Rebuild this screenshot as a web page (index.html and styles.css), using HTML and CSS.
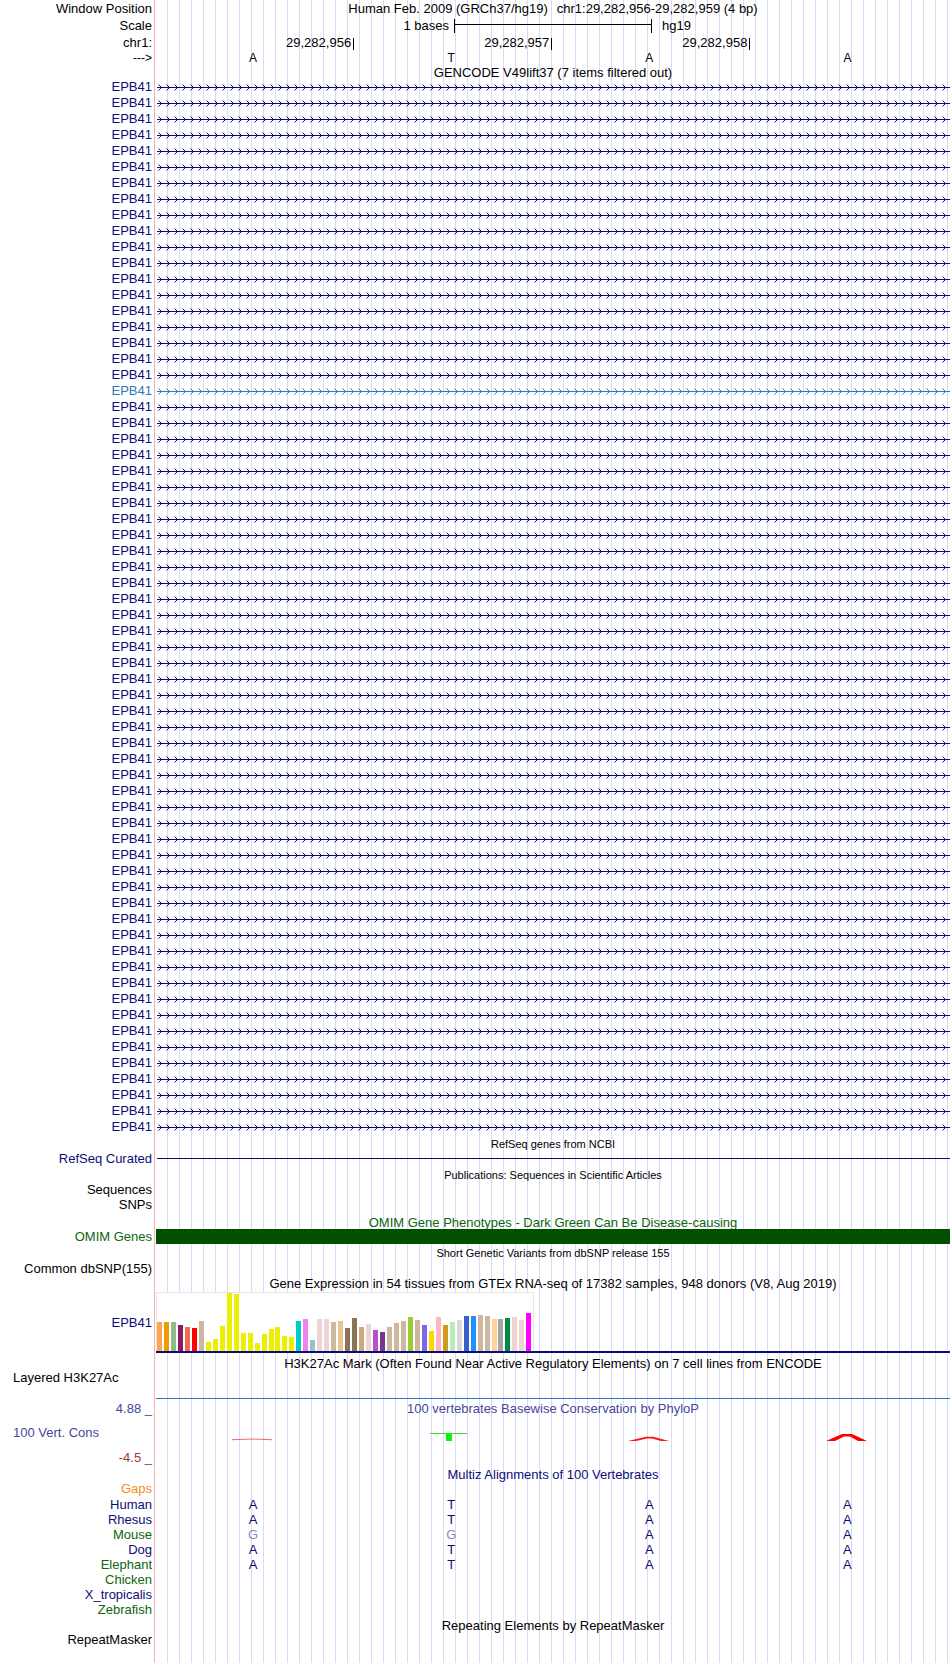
FILE: index.html
```html
<!DOCTYPE html>
<html>
<head>
  <title>UCSC Genome Browser - EPB41 (hg19)</title>
  <link rel="stylesheet" href="styles.css">
</head>
<body>
<div class="browser">

  <!-- ruler -->
  <div class="row hd">
    <div class="lbl">Window Position</div>
    <div class="dat ttl">Human Feb. 2009 (GRCh37/hg19)<span class="pos">chr1:29,282,956-29,282,959 (4 bp)</span></div>
  </div>
  <div class="row hd">
    <div class="lbl">Scale</div>
    <div class="dat scale">
      <span class="scale-txt">1 bases</span>
      <svg width="198" height="17"><path d="M0.5 2V16M197.5 2V16M0 7.5H198" stroke="#000" fill="none"/></svg>
      <span class="scale-db">hg19</span>
    </div>
  </div>
  <div class="row hd">
    <div class="lbl">chr1:</div>
    <div class="dat bases">
      <span class="coord">29,282,956<i class="tick"></i></span>
      <span class="coord">29,282,957<i class="tick"></i></span>
      <span class="coord">29,282,958<i class="tick"></i></span>
    </div>
  </div>
  <div class="row strand">
    <div class="lbl">---&gt;</div>
    <div class="dat bases"><span>A</span><span>T</span><span>A</span><span>A</span></div>
  </div>

  <!-- GENCODE -->
  <div class="row gencode-title">
    <div class="lbl"></div>
    <div class="dat ttl">GENCODE V49lift37 (7 items filtered out)</div>
  </div>
  <div class="genes">
    <div class="lbl gene-names">
      <div>EPB41</div><div>EPB41</div><div>EPB41</div><div>EPB41</div><div>EPB41</div>
      <div>EPB41</div><div>EPB41</div><div>EPB41</div><div>EPB41</div><div>EPB41</div>
      <div>EPB41</div><div>EPB41</div><div>EPB41</div><div>EPB41</div><div>EPB41</div>
      <div>EPB41</div><div>EPB41</div><div>EPB41</div><div>EPB41</div><div class="hl">EPB41</div>
      <div>EPB41</div><div>EPB41</div><div>EPB41</div><div>EPB41</div><div>EPB41</div>
      <div>EPB41</div><div>EPB41</div><div>EPB41</div><div>EPB41</div><div>EPB41</div>
      <div>EPB41</div><div>EPB41</div><div>EPB41</div><div>EPB41</div><div>EPB41</div>
      <div>EPB41</div><div>EPB41</div><div>EPB41</div><div>EPB41</div><div>EPB41</div>
      <div>EPB41</div><div>EPB41</div><div>EPB41</div><div>EPB41</div><div>EPB41</div>
      <div>EPB41</div><div>EPB41</div><div>EPB41</div><div>EPB41</div><div>EPB41</div>
      <div>EPB41</div><div>EPB41</div><div>EPB41</div><div>EPB41</div><div>EPB41</div>
      <div>EPB41</div><div>EPB41</div><div>EPB41</div><div>EPB41</div><div>EPB41</div>
      <div>EPB41</div><div>EPB41</div><div>EPB41</div><div>EPB41</div><div>EPB41</div>
      <div>EPB41</div>
    </div>
    <div class="dat">
      <svg width="794" height="1056">
        <defs>
          <pattern id="tx" width="8" height="16" patternUnits="userSpaceOnUse">
            <path d="M0 8.5H8M2.5 5.5L5.5 8.5L2.5 11.5" fill="none" stroke="#0c0c78"/>
          </pattern>
          <pattern id="tx-hl" width="8" height="16" patternUnits="userSpaceOnUse">
            <path d="M0 8.5H8M2.5 5.5L5.5 8.5L2.5 11.5" fill="none" stroke="#2a7ab8"/>
          </pattern>
        </defs>
        <rect x="1" y="0" width="793" height="304" fill="url(#tx)"/>
        <rect x="1" y="304" width="793" height="16" fill="url(#tx-hl)"/>
        <rect x="1" y="320" width="793" height="736" fill="url(#tx)"/>
      </svg>
    </div>
  </div>

  <!-- RefSeq -->
  <div class="row refseq-title">
    <div class="lbl"></div>
    <div class="dat ttl small">RefSeq genes from NCBI</div>
  </div>
  <div class="row refseq">
    <div class="lbl navy">RefSeq Curated</div>
    <div class="dat"><div class="gene-line"></div></div>
  </div>

  <!-- Publications -->
  <div class="row pubs-title">
    <div class="lbl"></div>
    <div class="dat ttl small">Publications: Sequences in Scientific Articles</div>
  </div>
  <div class="row pubs-seq">
    <div class="lbl">Sequences</div>
    <div class="dat"></div>
  </div>
  <div class="row pubs-snp">
    <div class="lbl">SNPs</div>
    <div class="dat"></div>
  </div>

  <!-- OMIM -->
  <div class="row omim-title">
    <div class="lbl"></div>
    <div class="dat ttl green">OMIM Gene Phenotypes - Dark Green Can Be Disease-causing</div>
  </div>
  <div class="row omim">
    <div class="lbl green">OMIM Genes</div>
    <div class="dat"><div class="omim-bar"></div></div>
  </div>

  <!-- dbSNP -->
  <div class="row snp-title">
    <div class="lbl"></div>
    <div class="dat ttl small">Short Genetic Variants from dbSNP release 155</div>
  </div>
  <div class="row snp">
    <div class="lbl">Common dbSNP(155)</div>
    <div class="dat"></div>
  </div>

  <!-- GTEx -->
  <div class="row gtex-title">
    <div class="lbl"></div>
    <div class="dat ttl">Gene Expression in 54 tissues from GTEx RNA-seq of 17382 samples, 948 donors (V8, Aug 2019)</div>
  </div>
  <div class="row gtex">
    <div class="lbl navy">EPB41</div>
    <div class="dat">
      <div class="gtex-box">
        <i class="bar" style="height:29px;background:#ffa54f"></i>
        <i class="bar" style="height:29px;background:#ee9a00"></i>
        <i class="bar" style="height:29px;background:#8fbc8f"></i>
        <i class="bar" style="height:26px;background:#8b1c62"></i>
        <i class="bar" style="height:24px;background:#ee6a50"></i>
        <i class="bar" style="height:23px;background:#ff0000"></i>
        <i class="bar" style="height:30px;background:#cdb79e"></i>
        <i class="bar" style="height:9px;background:#eeee00"></i>
        <i class="bar" style="height:12px;background:#eeee00"></i>
        <i class="bar" style="height:25px;background:#eeee00"></i>
        <i class="bar" style="height:58px;background:#eeee00"></i>
        <i class="bar" style="height:57px;background:#eeee00"></i>
        <i class="bar" style="height:18px;background:#eeee00"></i>
        <i class="bar" style="height:18px;background:#eeee00"></i>
        <i class="bar" style="height:8px;background:#eeee00"></i>
        <i class="bar" style="height:17px;background:#eeee00"></i>
        <i class="bar" style="height:22px;background:#eeee00"></i>
        <i class="bar" style="height:24px;background:#eeee00"></i>
        <i class="bar" style="height:15px;background:#eeee00"></i>
        <i class="bar" style="height:14px;background:#eeee00"></i>
        <i class="bar" style="height:30px;background:#00cdcd"></i>
        <i class="bar" style="height:32px;background:#ee82ee"></i>
        <i class="bar" style="height:11px;background:#9ac0cd"></i>
        <i class="bar" style="height:32px;background:#eed5d2"></i>
        <i class="bar" style="height:32px;background:#eed5d2"></i>
        <i class="bar" style="height:29px;background:#cdb79e"></i>
        <i class="bar" style="height:30px;background:#eec591"></i>
        <i class="bar" style="height:23px;background:#8b7355"></i>
        <i class="bar" style="height:33px;background:#8b7355"></i>
        <i class="bar" style="height:24px;background:#cdaa7d"></i>
        <i class="bar" style="height:27px;background:#eed5d2"></i>
        <i class="bar" style="height:21px;background:#b452cd"></i>
        <i class="bar" style="height:19px;background:#7a378b"></i>
        <i class="bar" style="height:24px;background:#cdb79e"></i>
        <i class="bar" style="height:28px;background:#cdb79e"></i>
        <i class="bar" style="height:30px;background:#cdb79e"></i>
        <i class="bar" style="height:34px;background:#9acd32"></i>
        <i class="bar" style="height:31px;background:#cdb79e"></i>
        <i class="bar" style="height:26px;background:#7a67ee"></i>
        <i class="bar" style="height:20px;background:#ffd700"></i>
        <i class="bar" style="height:34px;background:#ffb6c1"></i>
        <i class="bar" style="height:26px;background:#cd9b1d"></i>
        <i class="bar" style="height:29px;background:#b4eeb4"></i>
        <i class="bar" style="height:31px;background:#d9d9d9"></i>
        <i class="bar" style="height:35px;background:#3a5fcd"></i>
        <i class="bar" style="height:35px;background:#1e90ff"></i>
        <i class="bar" style="height:36px;background:#cdb79e"></i>
        <i class="bar" style="height:35px;background:#cdb79e"></i>
        <i class="bar" style="height:32px;background:#ffd39b"></i>
        <i class="bar" style="height:32px;background:#a6a6a6"></i>
        <i class="bar" style="height:33px;background:#008b45"></i>
        <i class="bar" style="height:34px;background:#eed5d2"></i>
        <i class="bar" style="height:31px;background:#eed5d2"></i>
        <i class="bar" style="height:38px;background:#ff00ff"></i>
      </div>
    </div>
  </div>

  <!-- H3K27Ac -->
  <div class="row h3k-title">
    <div class="lbl"></div>
    <div class="dat ttl">H3K27Ac Mark (Often Found Near Active Regulatory Elements) on 7 cell lines from ENCODE</div>
  </div>
  <div class="row h3k">
    <div class="lbl left">Layered H3K27Ac</div>
    <div class="dat"></div>
  </div>

  <!-- PhyloP -->
  <div class="row cons-title">
    <div class="lbl slate">4.88 _</div>
    <div class="dat ttl slate">100 vertebrates Basewise Conservation by PhyloP</div>
  </div>
  <div class="row cons">
    <div class="lbl left slate">100 Vert. Cons</div>
    <div class="dat">
      <svg width="794" height="28">
        <path d="M76 20.7Q96 19.4 116 20.7" fill="none" stroke="#ee4444" stroke-width="0.8"/>
        <path d="M274 14.5H311" stroke="#33dd33"/>
        <rect x="290" y="15" width="6" height="7" fill="#11ee11"/>
        <path d="M472 22L490 17.8L497 17.8L513 22L505 22L496 19.6L491 19.6L480 22Z" fill="#ff1414"/>
        <path d="M670 22L686 15L696 15L711 22L702 22L694 17.6L688 17.6L679 22Z" fill="#ff0000"/>
      </svg>
    </div>
  </div>
  <div class="row cons-min">
    <div class="lbl brown">-4.5 _</div>
    <div class="dat"></div>
  </div>

  <!-- Multiz -->
  <div class="row maf-title">
    <div class="lbl"></div>
    <div class="dat ttl navy">Multiz Alignments of 100 Vertebrates</div>
  </div>
  <div class="row gaps">
    <div class="lbl orange">Gaps</div>
    <div class="dat"></div>
  </div>
  <div class="row maf">
    <div class="lbl navy">Human</div>
    <div class="dat bases navy"><span>A</span><span>T</span><span>A</span><span>A</span></div>
  </div>
  <div class="row maf">
    <div class="lbl navy">Rhesus</div>
    <div class="dat bases navy"><span>A</span><span>T</span><span>A</span><span>A</span></div>
  </div>
  <div class="row maf">
    <div class="lbl green">Mouse</div>
    <div class="dat bases navy"><span class="diff">G</span><span class="diff">G</span><span>A</span><span>A</span></div>
  </div>
  <div class="row maf">
    <div class="lbl navy">Dog</div>
    <div class="dat bases navy"><span>A</span><span>T</span><span>A</span><span>A</span></div>
  </div>
  <div class="row maf">
    <div class="lbl green">Elephant</div>
    <div class="dat bases navy"><span>A</span><span>T</span><span>A</span><span>A</span></div>
  </div>
  <div class="row maf">
    <div class="lbl green">Chicken</div>
    <div class="dat"></div>
  </div>
  <div class="row maf">
    <div class="lbl navy">X_tropicalis</div>
    <div class="dat"></div>
  </div>
  <div class="row maf">
    <div class="lbl green">Zebrafish</div>
    <div class="dat"></div>
  </div>

  <!-- RepeatMasker -->
  <div class="row rmsk-title">
    <div class="lbl"></div>
    <div class="dat ttl">Repeating Elements by RepeatMasker</div>
  </div>
  <div class="row rmsk">
    <div class="lbl">RepeatMasker</div>
    <div class="dat"></div>
  </div>

</div>
</body>
</html>
```

FILE: styles.css
```css
body {
  margin: 0;
  font-family: "Liberation Sans", Arial, Helvetica, sans-serif;
  font-size: 13px;
  color: #000;
  background: #fff;
}
.browser {
  width: 950px;
  height: 1663px;
  overflow: hidden;
  background:
    linear-gradient(#f6b2b2, #f6b2b2) 154px 0 / 1px 100% no-repeat,
    repeating-linear-gradient(to right, #dadaf8 0 1px, transparent 1px 12px) 167px 0 / 783px 100% no-repeat;
}

/* rows: label column + data column */
.row {
  display: flex;
  height: 16px;
  line-height: 16px;
}
.lbl {
  flex: none;
  width: 154px;
  box-sizing: border-box;
  padding-right: 2px;
  text-align: right;
  white-space: nowrap;
}
.lbl.left {
  text-align: left;
  padding-left: 13px;
}
.dat {
  flex: 1;
  min-width: 0;
  margin-left: 2px;
  white-space: nowrap;
}
.ttl {
  text-align: center;
}
.ttl.small {
  font-size: 11px;
}

/* colours */
.navy { color: #0c0c78; }
.green { color: #0d650d; }
.slate { color: #46469a; }
.brown { color: #963c3c; }
.orange { color: #f0901c; }

/* row heights */
.hd { height: 17px; line-height: 17px; }
.strand { height: 15px; line-height: 15px; font-size: 12px; }
.gencode-title { height: 13px; line-height: 13px; }
.refseq-title { height: 18px; line-height: 18px; }
.refseq { height: 11px; line-height: 11px; }
.pubs-title { height: 22px; line-height: 22px; }
.pubs-seq { height: 8px; line-height: 8px; }
.pubs-snp { height: 22px; line-height: 22px; }
.omim-title { height: 13px; line-height: 13px; }
.omim { height: 15px; line-height: 15px; }
.snp-title { height: 18px; line-height: 18px; }
.snp { height: 13px; line-height: 13px; }
.gtex-title { height: 17px; line-height: 17px; }
.gtex { height: 61px; line-height: 61px; }
.h3k-title { height: 21px; line-height: 21px; }
.h3k { height: 25px; line-height: 8px; }
.cons-title { height: 20px; line-height: 20px; }
.cons { height: 28px; line-height: 28px; }
.cons-min { height: 22px; line-height: 22px; }
.maf-title { height: 12px; line-height: 12px; }
.gaps { height: 16px; line-height: 16px; }
.maf { height: 15px; line-height: 15px; }
.rmsk-title { height: 17px; line-height: 17px; }
.rmsk { height: 29px; line-height: 11px; }

/* ruler */
.pos {
  margin-left: 9px;
}
.scale {
  display: grid;
  grid-template-columns: 1fr 198px 1fr;
}
.scale svg {
  display: block;
}
.scale-txt {
  text-align: right;
  padding-right: 5px;
}
.scale-db {
  padding-left: 10px;
}
.dat.bases {
  margin-left: 0;
  display: grid;
  grid-template-columns: repeat(4, 198.13px);
  text-align: center;
}
.coord {
  justify-self: end;
  margin-right: -2px;
}
.tick {
  display: inline-block;
  width: 1px;
  height: 12px;
  margin-left: 2px;
  background: #000;
  vertical-align: -3px;
}

/* gene models */
.genes {
  display: flex;
  height: 1056px;
}
.gene-names {
  color: #0c0c78;
}
.gene-names div {
  height: 16px;
  line-height: 16px;
}
.gene-names .hl {
  color: #2a7ab8;
}
.genes svg,
.cons svg {
  display: block;
}
.refseq .dat {
  display: flex;
  align-items: center;
}
.gene-line {
  flex: 1;
  height: 1px;
  margin-left: 1px;
  background: #0c0c78;
}

/* OMIM */
.omim-bar {
  height: 15px;
  background: #005000;
}

/* GTEx */
.gtex .dat {
  box-sizing: border-box;
  border-bottom: 2px solid #0c0c78;
}
.gtex-box {
  display: flex;
  align-items: flex-end;
  gap: 1.97px;
  box-sizing: border-box;
  width: 378px;
  height: 59px;
  border: 1px solid #e6e6e6;
  border-bottom: none;
  background: #fff;
}
.bar {
  display: block;
  flex: none;
  width: 5px;
}

/* H3K27Ac */
.h3k .dat {
  box-sizing: border-box;
  border-bottom: 1px solid #2f78c8;
}

/* multiz */
.diff {
  color: #8c8cb8;
}
```
